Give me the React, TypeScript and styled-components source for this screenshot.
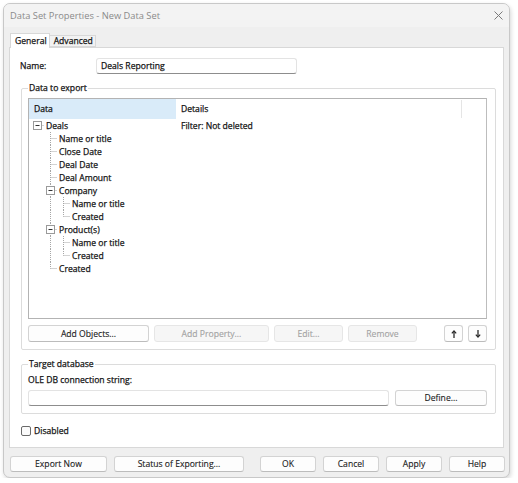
import React from "react";
import styled, { createGlobalStyle } from "styled-components";

const GlobalStyle = createGlobalStyle`
  html, body { margin: 0; padding: 0; background: #ffffff; }
  body {
    font-family: "Open Sans", "Noto Sans", Arial, sans-serif;
    font-size: 8.6px;
    color: #141414;
    -webkit-text-stroke: 0.25px currentColor;
  }
  * { box-sizing: border-box; }
`;

const Window = styled.div`
  margin: 3px 0 0 3px;
  width: 507px;
  height: 475px;
  display: flex;
  flex-direction: column;
  background: #efefef;
  border: 1px solid #c8c8c8;
  border-radius: 7px;
  box-shadow: 1px 2px 4px rgba(0, 0, 0, 0.16);
  overflow: hidden;
`;

const TitleBar = styled.div`
  flex: none;
  height: 23px;
  display: flex;
  align-items: center;
  justify-content: space-between;
  padding: 0 6px 0 6px;
  background: #f3f3f3;
`;

const Title = styled.span`
  font-size: 9.3px;
  color: #8a8a8a;
  -webkit-text-stroke: 0;
`;

const Body = styled.div`
  flex: none;
  display: flex;
  flex-direction: column;
  padding: 6px 5px 0 5px;
`;

const TabStrip = styled.div`
  display: flex;
  align-items: flex-end;
  height: 14px;
  padding-left: 1px;
`;

const Tab = styled.div<{ $active?: boolean }>`
  position: relative;
  z-index: ${(p) => (p.$active ? 1 : 0)};
  height: ${(p) => (p.$active ? "15px" : "12px")};
  margin-bottom: ${(p) => (p.$active ? "-1px" : "0")};
  padding: 0 2px 0 4px;
  display: flex;
  align-items: center;
  background: ${(p) => (p.$active ? "#ffffff" : "#f2f2f2")};
  border: 1px solid #d8d8d8;
  border-bottom: ${(p) => (p.$active ? "none" : "1px solid #d8d8d8")};
  border-left: ${(p) => (p.$active ? "1px solid #d8d8d8" : "none")};
`;

const Panel = styled.div`
  height: 401px;
  display: flex;
  flex-direction: column;
  background: #ffffff;
  border: 1px solid #d8d8d8;
  padding: 10px 7px 0 11px;
`;

const NameRow = styled.div`
  display: flex;
  align-items: center;
  height: 16px;
`;

const FieldLabel = styled.label<{ $width?: number }>`
  width: ${(p) => (p.$width ? `${p.$width}px` : "auto")};
  margin-left: -1px;
`;

const TextBox = styled.div<{ $width: number }>`
  width: ${(p) => p.$width}px;
  height: 16px;
  display: flex;
  align-items: center;
  padding-left: 4px;
  background: #ffffff;
  border: 1px solid #e3e3e3;
  border-bottom: 1px solid #8d8d8d;
  border-radius: 3px;
`;

const Group = styled.fieldset<{ $gap: number }>`
  margin: ${(p) => p.$gap}px 0 0 0;
  padding: 0 8px 7px 6px;
  border: 1px solid #dcdcdc;
  border-radius: 2px;
  min-width: 0;
`;

const Legend = styled.legend`
  padding: 0 1px;
  line-height: 14px;
`;

const ListView = styled.div`
  margin-top: 3px;
  height: 221px;
  border: 1px solid #b3b3b3;
  border-right-color: #bdbdbd;
  background: #ffffff;
  display: flex;
  flex-direction: column;
`;

const Header = styled.div`
  display: flex;
  height: 20px;
  flex: none;
`;

const HeaderCell = styled.div<{ $width: number; $sorted?: boolean }>`
  width: ${(p) => p.$width}px;
  display: flex;
  align-items: center;
  padding-left: 5px;
  background: ${(p) => (p.$sorted ? "#d9ebf9" : "#ffffff")};
  border-right: ${(p) => (p.$sorted ? "none" : "1px solid #e5e5e5")};
  margin: ${(p) => (p.$sorted ? "0" : "1px 0 1px 0")};
`;

const Row = styled.div`
  display: flex;
  height: 13px;
  align-items: center;
`;

const TreeCell = styled.div`
  width: 147px;
  display: flex;
  align-items: center;
  height: 13px;
`;

const DetailCell = styled.div`
  padding-left: 5px;
`;

const ButtonRow = styled.div`
  display: flex;
  gap: 5px;
  margin-top: 6px;
`;

const Button = styled.button<{ $width: number; $height?: number }>`
  width: ${(p) => p.$width}px;
  height: ${(p) => p.$height ?? 17}px;
  padding: 0;
  font-family: inherit;
  font-size: inherit;
  color: #1a1a1a;
  -webkit-text-stroke: 0.12px currentColor;
  background: #fdfdfd;
  border: 1px solid #d3d3d3;
  border-bottom-color: #bcbcbc;
  border-radius: 3px;
  display: flex;
  align-items: center;
  justify-content: center;
  &:disabled {
    color: #a2a2a2;
    background: #f6f6f6;
    border-color: #e6e6e6;
  }
`;

const Spacer = styled.div`
  flex: 1;
`;

const StringLabel = styled.div`
  margin-top: 2px;
  line-height: 14px;
`;

const InputRow = styled.div`
  display: flex;
  gap: 6px;
  margin-top: 3px;
`;

const CheckRow = styled.label`
  display: flex;
  align-items: center;
  gap: 3px;
  margin-top: 11px;
  height: 11px;
`;

const CheckBox = styled.span`
  width: 10px;
  height: 10px;
  border: 1px solid #6a6a6a;
  border-radius: 2px;
  background: #fbfbfb;
`;

const BottomBar = styled.div`
  display: flex;
  gap: 7px;
  padding: 8px 4px 0 6px;
`;

const WideGap = styled.div`
  flex: 1;
`;

/* Tree data: level, label, whether it has children, last-sibling flag,
   and for each ancestor column whether its sibling line continues. */
type Node = {
  level: number;
  label: string;
  parent?: boolean;
  last?: boolean;
  cont: boolean[];
  detail?: string;
};

const nodes: Node[] = [
  { level: 0, label: "Deals", parent: true, last: true, cont: [], detail: "Filter: Not deleted" },
  { level: 1, label: "Name or title", cont: [] },
  { level: 1, label: "Close Date", cont: [] },
  { level: 1, label: "Deal Date", cont: [] },
  { level: 1, label: "Deal Amount", cont: [] },
  { level: 1, label: "Company", parent: true, cont: [] },
  { level: 2, label: "Name or title", cont: [true] },
  { level: 2, label: "Created", last: true, cont: [true] },
  { level: 1, label: "Product(s)", parent: true, cont: [] },
  { level: 2, label: "Name or title", cont: [true] },
  { level: 2, label: "Created", last: true, cont: [true] },
  { level: 1, label: "Created", last: true, cont: [] },
];

const LINE = "#a6a6a6";

function TreeLines({ node }: { node: Node }) {
  const col = (l: number) => 8 + 13 * l + 0.5;
  const width = 17 + 13 * node.level;
  const cx = col(node.level);
  return (
    <svg width={width} height={13} style={{ flex: "none" }}>
      {node.cont.map((c, i) =>
        c ? (
          <line key={i} x1={col(i + 1)} y1={0} x2={col(i + 1)} y2={13} stroke={LINE} strokeDasharray="1 1" />
        ) : null
      )}
      {node.level > 0 && (
        <line x1={cx} y1={0} x2={cx} y2={node.last ? 6.5 : 13} stroke={LINE} strokeDasharray="1 1" />
      )}
      <line x1={cx} y1={6.5} x2={width - 2} y2={6.5} stroke={LINE} strokeDasharray="1 1" />
      {node.parent && (
        <g>
          <rect x={cx - 4} y={2.5} width={8} height={8} fill="#ffffff" stroke="#9a9a9a" />
          <line x1={cx - 2} y1={6.5} x2={cx + 2} y2={6.5} stroke="#333" />
        </g>
      )}
    </svg>
  );
}

function CloseGlyph() {
  return (
    <svg width="9" height="9" viewBox="0 0 9 9">
      <path d="M0.5 0.5 L8.5 8.5 M8.5 0.5 L0.5 8.5" stroke="#7a7a7a" strokeWidth="1" fill="none" />
    </svg>
  );
}

function Arrow({ down }: { down?: boolean }) {
  return (
    <svg width="6" height="8" viewBox="0 0 6 8">
      <g transform={down ? "rotate(180 3 4)" : undefined}>
        <path d="M3 1 V8" stroke="#2a2a2a" strokeWidth="1.3" />
        <path d="M0.8 3.4 L3 1 L5.2 3.4" stroke="#2a2a2a" strokeWidth="1.2" fill="none" />
      </g>
    </svg>
  );
}

export default function App() {
  return (
    <>
      <GlobalStyle />
      <Window>
        <TitleBar>
          <Title>Data Set Properties - New Data Set</Title>
          <CloseGlyph />
        </TitleBar>
        <Body>
          <TabStrip>
            <Tab $active>General</Tab>
            <Tab>Advanced</Tab>
          </TabStrip>
          <Panel>
            <NameRow>
              <FieldLabel $width={76}>Name:</FieldLabel>
              <TextBox $width={201}>Deals Reporting</TextBox>
            </NameRow>

            <Group $gap={7}>
              <Legend>Data to export</Legend>
              <ListView>
                <Header>
                  <HeaderCell $width={147} $sorted>Data</HeaderCell>
                  <HeaderCell $width={286}>Details</HeaderCell>
                </Header>
                {nodes.map((n, i) => (
                  <Row key={i}>
                    <TreeCell>
                      <TreeLines node={n} />
                      <span>{n.label}</span>
                    </TreeCell>
                    {n.detail && <DetailCell>{n.detail}</DetailCell>}
                  </Row>
                ))}
              </ListView>
              <ButtonRow>
                <Button $width={121}>Add Objects...</Button>
                <Button $width={115} disabled>Add Property...</Button>
                <Button $width={69} disabled>Edit...</Button>
                <Button $width={69} disabled>Remove</Button>
                <Spacer />
                <Button $width={19}><Arrow /></Button>
                <Button $width={19}><Arrow down /></Button>
              </ButtonRow>
            </Group>

            <Group $gap={7}>
              <Legend>Target database</Legend>
              <StringLabel>OLE DB connection string:</StringLabel>
              <InputRow>
                <TextBox $width={361} />
                <Button $width={92} $height={16}>Define...</Button>
              </InputRow>
            </Group>

            <CheckRow>
              <CheckBox />
              Disabled
            </CheckRow>
          </Panel>
        </Body>
        <BottomBar>
          <Button $width={97} $height={16}>Export Now</Button>
          <Button $width={130} $height={16}>Status of Exporting...</Button>
          <WideGap />
          <Button $width={56} $height={16}>OK</Button>
          <Button $width={56} $height={16}>Cancel</Button>
          <Button $width={56} $height={16}>Apply</Button>
          <Button $width={56} $height={16}>Help</Button>
        </BottomBar>
      </Window>
    </>
  );
}
